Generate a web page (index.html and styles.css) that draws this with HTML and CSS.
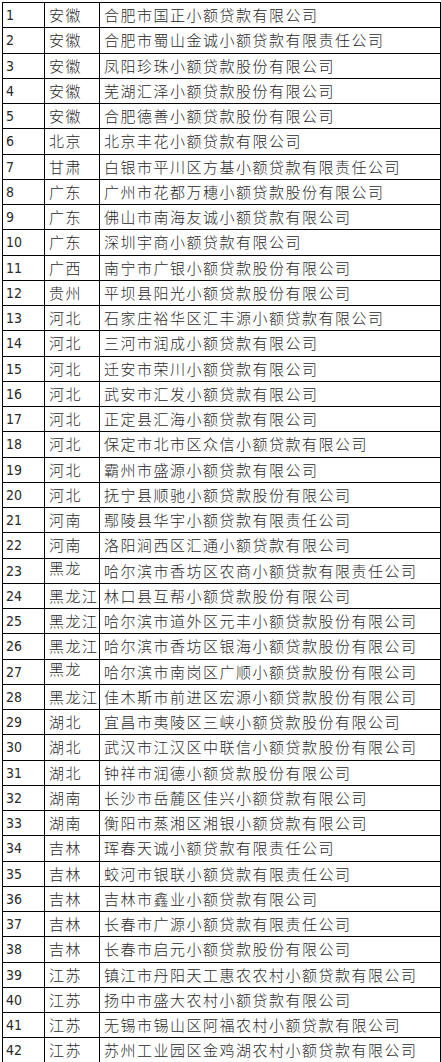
FILE: index.html
```html
<!DOCTYPE html>
<html lang="zh-CN">
<head>
<meta charset="utf-8">
<title>小额贷款公司名单</title>
<link rel="stylesheet" href="styles.css">
</head>
<body>
<table class="list">
<colgroup><col class="c-no"><col class="c-prov"><col class="c-name"></colgroup>
<tbody>
<tr><td class="no">1</td><td class="prov">安徽</td><td class="name">合肥市国正小额贷款有限公司</td></tr>
<tr><td class="no">2</td><td class="prov">安徽</td><td class="name">合肥市蜀山金诚小额贷款有限责任公司</td></tr>
<tr><td class="no">3</td><td class="prov">安徽</td><td class="name">凤阳珍珠小额贷款股份有限公司</td></tr>
<tr><td class="no">4</td><td class="prov">安徽</td><td class="name">芜湖汇泽小额贷款股份有限公司</td></tr>
<tr><td class="no">5</td><td class="prov">安徽</td><td class="name">合肥德善小额贷款股份有限公司</td></tr>
<tr><td class="no">6</td><td class="prov">北京</td><td class="name">北京丰花小额贷款有限公司</td></tr>
<tr><td class="no">7</td><td class="prov">甘肃</td><td class="name">白银市平川区方基小额贷款有限责任公司</td></tr>
<tr><td class="no">8</td><td class="prov">广东</td><td class="name">广州市花都万穗小额贷款股份有限公司</td></tr>
<tr><td class="no">9</td><td class="prov">广东</td><td class="name">佛山市南海友诚小额贷款有限公司</td></tr>
<tr><td class="no">10</td><td class="prov">广东</td><td class="name">深圳宇商小额贷款有限公司</td></tr>
<tr><td class="no">11</td><td class="prov">广西</td><td class="name">南宁市广银小额贷款股份有限公司</td></tr>
<tr><td class="no">12</td><td class="prov">贵州</td><td class="name">平坝县阳光小额贷款股份有限公司</td></tr>
<tr><td class="no">13</td><td class="prov">河北</td><td class="name">石家庄裕华区汇丰源小额贷款有限公司</td></tr>
<tr><td class="no">14</td><td class="prov">河北</td><td class="name">三河市润成小额贷款有限公司</td></tr>
<tr><td class="no">15</td><td class="prov">河北</td><td class="name">迁安市荣川小额贷款有限公司</td></tr>
<tr><td class="no">16</td><td class="prov">河北</td><td class="name">武安市汇发小额贷款有限公司</td></tr>
<tr><td class="no">17</td><td class="prov">河北</td><td class="name">正定县汇海小额贷款有限公司</td></tr>
<tr><td class="no">18</td><td class="prov">河北</td><td class="name">保定市北市区众信小额贷款有限公司</td></tr>
<tr><td class="no">19</td><td class="prov">河北</td><td class="name">霸州市盛源小额贷款有限公司</td></tr>
<tr><td class="no">20</td><td class="prov">河北</td><td class="name">抚宁县顺驰小额贷款股份有限公司</td></tr>
<tr><td class="no">21</td><td class="prov">河南</td><td class="name">鄢陵县华宇小额贷款有限责任公司</td></tr>
<tr><td class="no">22</td><td class="prov">河南</td><td class="name">洛阳涧西区汇通小额贷款有限公司</td></tr>
<tr><td class="no">23</td><td class="prov top">黑龙</td><td class="name">哈尔滨市香坊区农商小额贷款有限责任公司</td></tr>
<tr><td class="no">24</td><td class="prov">黑龙江</td><td class="name">林口县互帮小额贷款股份有限公司</td></tr>
<tr><td class="no">25</td><td class="prov">黑龙江</td><td class="name">哈尔滨市道外区元丰小额贷款股份有限公司</td></tr>
<tr><td class="no">26</td><td class="prov">黑龙江</td><td class="name">哈尔滨市香坊区银海小额贷款股份有限公司</td></tr>
<tr><td class="no">27</td><td class="prov top">黑龙</td><td class="name">哈尔滨市南岗区广顺小额贷款股份有限公司</td></tr>
<tr><td class="no">28</td><td class="prov">黑龙江</td><td class="name">佳木斯市前进区宏源小额贷款股份有限公司</td></tr>
<tr><td class="no">29</td><td class="prov">湖北</td><td class="name">宜昌市夷陵区三峡小额贷款股份有限公司</td></tr>
<tr><td class="no">30</td><td class="prov">湖北</td><td class="name">武汉市江汉区中联信小额贷款股份有限公司</td></tr>
<tr><td class="no">31</td><td class="prov">湖北</td><td class="name">钟祥市润德小额贷款股份有限公司</td></tr>
<tr><td class="no">32</td><td class="prov">湖南</td><td class="name">长沙市岳麓区佳兴小额贷款有限公司</td></tr>
<tr><td class="no">33</td><td class="prov">湖南</td><td class="name">衡阳市蒸湘区湘银小额贷款有限公司</td></tr>
<tr><td class="no">34</td><td class="prov">吉林</td><td class="name">珲春天诚小额贷款有限责任公司</td></tr>
<tr><td class="no">35</td><td class="prov">吉林</td><td class="name">蛟河市银联小额贷款有限责任公司</td></tr>
<tr><td class="no">36</td><td class="prov">吉林</td><td class="name">吉林市鑫业小额贷款有限公司</td></tr>
<tr><td class="no">37</td><td class="prov">吉林</td><td class="name">长春市广源小额贷款有限责任公司</td></tr>
<tr><td class="no">38</td><td class="prov">吉林</td><td class="name">长春市启元小额贷款股份有限公司</td></tr>
<tr><td class="no">39</td><td class="prov">江苏</td><td class="name">镇江市丹阳天工惠农农村小额贷款有限公司</td></tr>
<tr><td class="no">40</td><td class="prov">江苏</td><td class="name">扬中市盛大农村小额贷款有限公司</td></tr>
<tr><td class="no">41</td><td class="prov">江苏</td><td class="name">无锡市锡山区阿福农村小额贷款有限公司</td></tr>
<tr><td class="no">42</td><td class="prov">江苏</td><td class="name">苏州工业园区金鸡湖农村小额贷款有限公司</td></tr>
</tbody>
</table>
</body>
</html>
```
FILE: styles.css
```css
html, body {
  margin: 0;
  padding: 0;
  background: #fff;
}
body {
  padding: 2px 0 0 2px;
  font-family: "Noto Sans CJK SC", "DejaVu Sans", sans-serif;
  color: #2a2a2a;
}
.list {
  border-collapse: collapse;
  table-layout: fixed;
  width: 438px;
}
.c-no { width: 42px; }
.c-prov { width: 55px; }
.c-name { width: 341px; }
.list td {
  border: 1px solid #000;
  height: 25.25px;
  box-sizing: border-box;
  padding: 0 0 0 4px;
  font-size: 15px;
  line-height: 18px;
  white-space: nowrap;
  overflow: hidden;
  vertical-align: middle;
}
.list td.no {
  font-family: "DejaVu Sans Condensed", "DejaVu Sans", sans-serif;
  font-size: 14px;
  padding-left: 3px;
}
.list td.prov,
.list td.name {
  letter-spacing: 1.5px;
  font-weight: 300;
}
.list td.prov.top {
  vertical-align: top;
  padding-top: 0;
}
```
